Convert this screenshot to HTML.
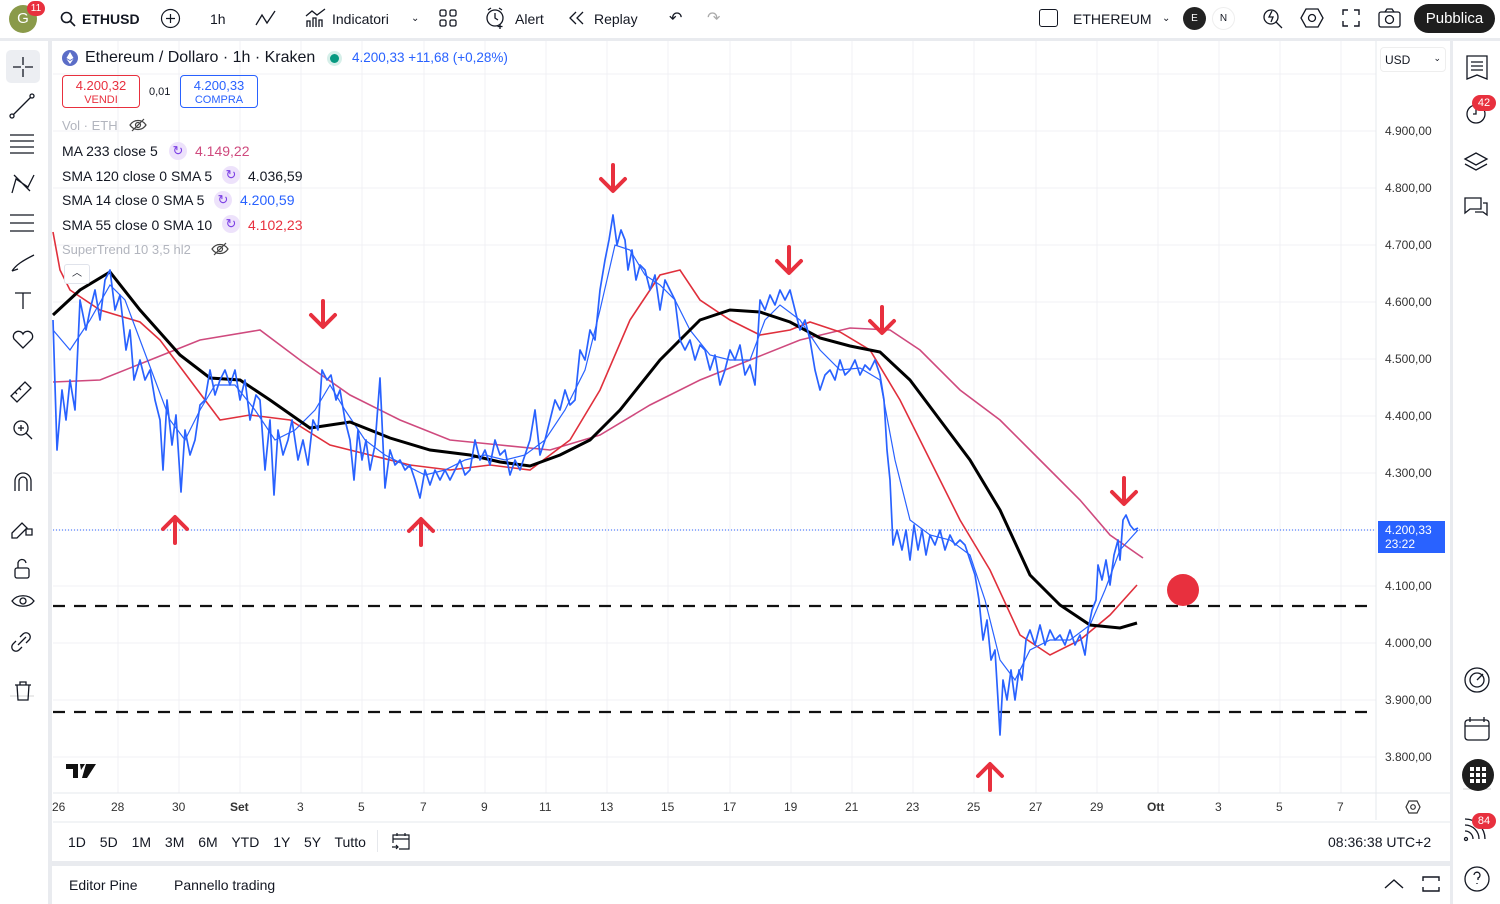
<!DOCTYPE html>
<html><head><meta charset="utf-8"><style>
*{margin:0;padding:0;box-sizing:border-box}
body{width:1500px;height:904px;overflow:hidden;background:#e9ebef;font-family:"Liberation Sans",sans-serif;color:#131722;position:relative}
.abs{position:absolute}
.top{left:0;top:0;width:1500px;height:38px;background:#fff}
.t{position:absolute;font-size:14px;top:11px;white-space:nowrap}
.left{left:0;top:41px;width:48px;height:863px;background:#fff}
.right{left:1453px;top:41px;width:47px;height:863px;background:#fff}
.main{left:52px;top:41px;width:1398px;height:820px;background:#fff}
.bot{left:52px;top:866px;width:1398px;height:38px;background:#fff}
.lg{position:absolute;font-size:14px;white-space:nowrap}
.ax{position:absolute;font-size:12px;color:#333;left:1385px}
.dx{position:absolute;font-size:12px;color:#333;top:800px}
.ic{position:absolute;width:18px;height:18px;border-radius:50%;background:#ede2fb;color:#7b3fe4;text-align:center;line-height:18px;font-size:13px}
</style></head><body>
<div class="abs top">
 <div class="abs" style="left:9px;top:5px;width:28px;height:28px;border-radius:50%;background:#8a9a4a;color:#fff;font-size:15px;text-align:center;line-height:28px">G</div>
 <div class="abs" style="left:27px;top:1px;width:18px;height:15px;border-radius:8px;background:#e8303e;color:#fff;font-size:10px;text-align:center;line-height:15px">11</div>
 <svg class="abs" style="left:60px;top:11px" width="16" height="16" fill="none" stroke="#131722" stroke-width="1.6"><circle cx="6.5" cy="6.5" r="5"/><path d="M10 10l5 5"/></svg>
 <div class="t" style="left:82px;font-weight:bold">ETHUSD</div>
 <svg class="abs" style="left:160px;top:8px" width="21" height="21" fill="none" stroke="#131722" stroke-width="1.2"><circle cx="10.5" cy="10.5" r="9"/><path d="M10.5 6v9M6 10.5h9"/></svg>
 <div class="t" style="left:210px">1h</div>
 <svg class="abs" style="left:255px;top:9px" width="22" height="18" fill="none" stroke="#131722" stroke-width="1.3"><path d="M1 16l6-10 5 8 8-12"/></svg>
 <svg class="abs" style="left:305px;top:8px" width="22" height="20" fill="none" stroke="#131722" stroke-width="1.3"><path d="M2 19V13h3v6M8 19V10h3v9M14 19V12h3v7M1 8l6-5 5 4 8-6"/></svg>
 <div class="t" style="left:332px">Indicatori</div>
 <div class="t" style="left:411px;font-size:10px;top:13px">⌄</div>
 <svg class="abs" style="left:439px;top:9px" width="18" height="18" fill="none" stroke="#131722" stroke-width="1.3"><rect x="1" y="1" width="6" height="6" rx="1.5"/><rect x="11" y="1" width="6" height="6" rx="1.5"/><rect x="1" y="11" width="6" height="6" rx="1.5"/><rect x="11" y="11" width="6" height="6" rx="1.5"/></svg>
 <svg class="abs" style="left:485px;top:7px" width="22" height="22" fill="none" stroke="#131722" stroke-width="1.3"><circle cx="10" cy="11" r="8"/><path d="M10 6v5l3 2M15 17v5M12.5 19.5h5M3 3l3-2M17 3l-3-2"/></svg>
 <div class="t" style="left:515px">Alert</div>
 <svg class="abs" style="left:568px;top:11px" width="18" height="14" fill="none" stroke="#131722" stroke-width="1.3"><path d="M8 1L2 7l6 6M15 1L9 7l6 6"/></svg>
 <div class="t" style="left:594px">Replay</div>
 <div class="t" style="left:669px;font-size:16px;top:8px">↶</div>
 <div class="t" style="left:707px;font-size:16px;top:8px;color:#aaa">↷</div>
 <div class="abs" style="left:1039px;top:9px;width:19px;height:18px;border:1.4px solid #131722;border-radius:3px"></div>
 <div class="t" style="left:1073px">ETHEREUM</div>
 <div class="t" style="left:1162px;font-size:10px;top:13px">⌄</div>
 <div class="abs" style="left:1183px;top:7px;width:23px;height:23px;border-radius:50%;background:#222;color:#fff;font-size:10px;text-align:center;line-height:23px">E</div>
 <div class="abs" style="left:1212px;top:7px;width:23px;height:23px;border-radius:50%;background:#fff;border:1px solid #eee;font-size:10px;text-align:center;line-height:21px">N</div>
 <svg class="abs" style="left:1262px;top:7px" width="22" height="22" fill="none" stroke="#131722" stroke-width="1.3"><circle cx="9" cy="10" r="7"/><path d="M14 15l6 6M10 4l-3 6h4l-2 5"/></svg>
 <svg class="abs" style="left:1300px;top:7px" width="24" height="22" fill="none" stroke="#131722" stroke-width="1.3"><path d="M6 2h12l5 9-5 9H6L1 11z"/><circle cx="12" cy="11" r="3.5"/></svg>
 <svg class="abs" style="left:1342px;top:9px" width="18" height="18" fill="none" stroke="#131722" stroke-width="1.4"><path d="M1 6V1h5M12 1h5v5M17 12v5h-5M6 17H1v-5"/></svg>
 <svg class="abs" style="left:1378px;top:8px" width="23" height="20" fill="none" stroke="#131722" stroke-width="1.3"><rect x="1" y="4" width="21" height="15" rx="2"/><path d="M7 4l2-3h5l2 3"/><circle cx="11.5" cy="11.5" r="4"/></svg>
 <div class="abs" style="left:1414px;top:4px;width:81px;height:29px;border-radius:15px;background:#1e1e1e;color:#fff;font-size:15px;text-align:center;line-height:29px">Pubblica</div>
</div>

<div class="abs left">
 <div class="abs" style="left:6px;top:9px;width:34px;height:33px;background:#eceef2;border-radius:5px"></div>
 <svg class="abs" style="left:0;top:0" width="48" height="700" fill="none" stroke="#131722" stroke-width="1.3">
  <path d="M23 16v8M23 28v8M13 26h8M25 26h8"/>
  <path d="M12 75l20-20"/><circle cx="12" cy="75" r="2" fill="#fff"/><circle cx="32" cy="55" r="2" fill="#fff"/>
  <path d="M10 94h24M10 100h24M10 106h24M10 112h24"/>
  <path d="M12 152l4-14 12 8 6-12M14 134l16 16"/>
  <path d="M10 174h24M10 182h24M10 190h24"/>
  <path d="M12 230c4-6 10-10 22-16M12 230l6-2"/>
  <path d="M15 252h16M23 252v16"/>
  <path d="M23 307l-9-9a5 5 0 0 1 9-5 5 5 0 0 1 9 5z"/>
  <path d="M11 355l14-14 6 6-14 14zM15 351l2 2M19 347l2 2"/>
  <circle cx="21" cy="387" r="7"/><path d="M26 392l6 6M18 387h6M21 384v6"/>
  <path d="M15 450v-10a8 8 0 0 1 16 0v10M19 450v-10a4 4 0 0 1 8 0v10"/>
  <path d="M12 492l10-10 5 5-10 10h-5zM26 488h6v6h-6z"/>
  <rect x="15" y="527" width="14" height="10" rx="2"/><path d="M18 527v-4a4 4 0 0 1 8-1"/>
  <path d="M12 560c5-7 17-7 22 0-5 7-17 7-22 0z"/><circle cx="23" cy="560" r="3"/>
  <path d="M16 600l-3 3a4 4 0 0 0 6 6l3-3M26 602l3-3a4 4 0 0 0-6-6l-3 3M18 604l8-8"/>
  <path d="M10 655h24" stroke="#ddd"/>
  <path d="M15 644h16M17 644l1 15h10l1-15M20 644v-3h6v3"/>
 </svg>
</div>

<div class="abs main"></div>
<svg class="abs" style="left:0;top:0" width="1500" height="904">
 <g stroke="#f0f1f4" stroke-width="1">
  <path d="M118 41V793M179 41V793M240 41V793M301 41V793M362 41V793M424 41V793M485 41V793M546 41V793M607 41V793M668 41V793M730 41V793M791 41V793M852 41V793M913 41V793M974 41V793M1036 41V793M1097 41V793M1158 41V793M1219 41V793M1280 41V793M1341 41V793"/>
  <path d="M53 74H1376M53 131H1376M53 188H1376M53 245H1376M53 302H1376M53 359H1376M53 416H1376M53 473H1376M53 530H1376M53 586H1376M53 643H1376M53 700H1376M53 757H1376"/>
 </g>
 <path d="M1376 41V820M53 793H1450M53 822H1450" stroke="#e6e8ec"/>
 <path d="M53 530H1376" stroke="#2962ff" stroke-width="1" stroke-dasharray="1 2"/>
 <path d="M53 606H1372M53 712H1372" stroke="#111" stroke-width="2.2" stroke-dasharray="12 9"/>
 <polyline fill="none" stroke="#cf4a7e" stroke-width="1.6" points="53,382 100,380 150,360 200,340 260,330 300,360 350,395 400,420 450,440 500,445 550,450 600,435 650,405 700,380 750,360 800,340 850,328 890,330 920,350 960,390 1000,420 1040,460 1080,500 1110,535 1143,558"/>
 <polyline fill="none" stroke="#e0303c" stroke-width="1.6" points="53,232 60,270 70,290 100,310 140,322 160,340 190,380 220,420 250,415 290,420 330,445 370,455 410,465 450,470 490,465 530,470 570,440 600,390 630,320 660,275 680,270 700,300 730,320 760,335 790,330 810,322 840,332 870,350 900,400 930,460 960,520 990,570 1020,635 1050,655 1080,640 1110,615 1137,585"/>
 <polyline fill="none" stroke="#2962ff" stroke-width="1.2" points="53,330 70,350 90,320 110,285 125,300 140,340 155,380 170,420 185,440 200,410 215,385 235,385 255,410 275,440 295,430 315,410 330,385 345,410 365,440 385,455 405,465 425,475 445,470 465,460 485,455 505,460 525,455 545,440 565,410 585,370 600,310 615,245 630,250 645,275 660,285 675,300 690,330 710,355 730,360 750,360 765,320 780,305 800,320 820,350 840,370 860,368 880,380 895,460 910,520 930,535 950,540 970,555 985,600 1000,660 1015,680 1030,650 1050,640 1070,640 1090,625 1105,590 1120,550 1138,530"/>
 <polyline fill="none" stroke="#000" stroke-width="3" points="53,315 80,290 110,272 140,310 180,355 210,378 240,380 270,400 310,428 350,422 390,438 430,450 470,455 500,462 530,466 560,455 590,440 620,410 660,360 700,320 730,310 760,312 790,322 820,338 850,346 880,352 910,380 940,420 970,460 1000,510 1030,575 1060,605 1090,625 1120,628 1137,623"/>
 <polyline fill="none" stroke="#2962ff" stroke-width="1.7" stroke-linejoin="round" points="53,320 57,450 62,390 66,420 70,380 75,410 80,300 86,330 90,310 95,290 100,320 105,280 110,270 115,310 120,295 126,350 130,330 134,380 140,360 145,380 150,370 155,400 160,420 163,470 167,400 172,445 176,415 181,492 185,430 190,455 195,440 200,405 205,400 210,370 215,395 220,380 225,370 230,385 235,370 240,400 245,380 250,420 256,395 260,400 265,470 270,420 274,495 278,430 283,455 288,440 292,420 298,460 303,440 308,465 313,420 318,430 322,370 327,380 331,375 336,400 340,390 345,420 350,440 354,480 358,430 362,460 366,440 370,470 375,445 380,378 385,488 390,450 395,465 400,460 405,470 410,465 415,480 420,498 425,470 430,485 435,470 440,480 445,470 450,480 455,470 460,460 465,475 470,470 475,440 480,460 485,450 490,465 495,440 500,455 505,450 510,475 515,460 520,470 525,455 530,440 535,410 540,455 545,440 550,420 555,400 560,410 565,390 570,405 575,400 580,350 585,360 590,330 595,340 600,290 605,260 609,240 613,215 617,245 621,230 625,240 628,270 632,250 636,280 640,265 645,270 650,290 655,275 660,310 665,280 670,290 675,300 680,340 685,350 690,340 695,360 700,345 705,350 710,370 715,355 720,385 725,370 730,350 735,360 740,345 745,375 750,365 755,385 760,300 765,310 770,295 775,305 780,290 785,300 790,290 795,310 800,330 805,320 810,340 815,370 820,390 825,375 830,370 835,380 840,360 845,375 850,370 855,360 860,375 865,365 870,370 875,360 880,375 884,400 887,450 890,480 893,545 897,530 902,550 906,530 910,560 914,525 918,550 922,530 926,555 930,535 935,545 940,530 945,550 950,535 955,545 960,540 965,545 970,560 975,575 979,600 983,640 987,620 991,660 995,650 998,700 1000,735 1003,680 1007,700 1011,670 1015,700 1019,670 1022,680 1026,640 1030,630 1035,645 1040,625 1045,645 1050,630 1055,640 1060,635 1065,645 1070,630 1075,645 1080,635 1085,655 1088,630 1092,610 1096,600 1098,565 1102,580 1106,560 1110,585 1114,555 1118,540 1120,560 1123,520 1126,515 1130,525 1134,530 1138,528"/>
 <g fill="none" stroke="#e8303e" stroke-width="4" stroke-linecap="round" stroke-linejoin="round">
  <path d="M613 165v25M601 179l12 12 12-12"/>
  <path d="M323 301v25M311 315l12 12 12-12"/>
  <path d="M789 247v25M777 261l12 12 12-12"/>
  <path d="M882 307v25M870 321l12 12 12-12"/>
  <path d="M1124 478v25M1112 492l12 12 12-12"/>
  <path d="M175 543v-25M163 529l12-12 12 12"/>
  <path d="M421 545v-25M409 531l12-12 12 12"/>
  <path d="M990 790v-25M978 776l12-12 12 12"/>
 </g>
 <circle cx="1183" cy="590" r="16" fill="#e8303e"/>
 <path d="M66 764h12v14h-5v-9h-7zM80 764h5l-4 6zM86 764h10l-9 14h-5z" fill="#111"/>
</svg>

<!-- legend -->
<svg class="abs" style="left:62px;top:50px" width="16" height="16"><circle cx="8" cy="8" r="8" fill="#5b6dc7"/><path d="M8 2l-3.5 6L8 10l3.5-2zM4.5 9L8 14l3.5-5L8 11z" fill="#fff"/></svg>
<div class="lg" style="left:85px;top:49px;font-size:16px">Ethereum / Dollaro · 1h · Kraken</div>
<div class="abs" style="left:330px;top:54px;width:9px;height:9px;border-radius:50%;background:#089981;box-shadow:0 0 0 3px #d6efe9"></div>
<div class="lg" style="left:352px;top:50px;color:#2962ff;font-size:13.5px">4.200,33 +11,68 (+0,28%)</div>
<div class="abs" style="left:62px;top:75px;width:78px;height:33px;border:1px solid #e8303e;border-radius:4px;color:#e8303e;text-align:center;font-size:13px;line-height:13px;padding-top:3px">4.200,32<br><span style="font-size:11px">VENDI</span></div>
<div class="lg" style="left:149px;top:86px;font-size:11px">0,01</div>
<div class="abs" style="left:180px;top:75px;width:78px;height:33px;border:1px solid #2962ff;border-radius:4px;color:#2962ff;text-align:center;font-size:13px;line-height:13px;padding-top:3px">4.200,33<br><span style="font-size:11px">COMPRA</span></div>
<div class="lg" style="left:62px;top:118px;color:#b2b5be;font-size:13px">Vol · ETH</div>
<svg class="abs" style="left:129px;top:118px" width="18" height="14" fill="none" stroke="#444" stroke-width="1.2"><path d="M1 7c4-6 12-6 16 0-4 6-12 6-16 0z"/><circle cx="9" cy="7" r="2.5"/><path d="M3 13L15 1"/></svg>
<div class="lg" style="left:62px;top:143px">MA 233 close 5</div><div class="ic" style="left:169px;top:142px">↻</div><div class="lg" style="left:195px;top:143px;color:#cf4a7e">4.149,22</div>
<div class="lg" style="left:62px;top:168px">SMA 120 close 0 SMA 5</div><div class="ic" style="left:222px;top:166px">↻</div><div class="lg" style="left:248px;top:168px">4.036,59</div>
<div class="lg" style="left:62px;top:192px">SMA 14 close 0 SMA 5</div><div class="ic" style="left:214px;top:191px">↻</div><div class="lg" style="left:240px;top:192px;color:#2962ff">4.200,59</div>
<div class="lg" style="left:62px;top:217px">SMA 55 close 0 SMA 10</div><div class="ic" style="left:222px;top:215px">↻</div><div class="lg" style="left:248px;top:217px;color:#e8303e">4.102,23</div>
<div class="lg" style="left:62px;top:242px;color:#b2b5be;font-size:13px">SuperTrend 10 3,5 hl2</div>
<svg class="abs" style="left:211px;top:242px" width="18" height="14" fill="none" stroke="#444" stroke-width="1.2"><path d="M1 7c4-6 12-6 16 0-4 6-12 6-16 0z"/><circle cx="9" cy="7" r="2.5"/><path d="M3 13L15 1"/></svg>
<div class="abs" style="left:64px;top:264px;width:26px;height:20px;border:1px solid #e0e3eb;border-radius:3px;background:#fff;font-size:10px;text-align:center;line-height:18px">︿</div>

<!-- price axis -->
<div class="abs" style="left:1380px;top:47px;width:66px;height:25px;border:1px solid #eee;border-radius:4px;background:#fff;font-size:12px;padding:5px 4px">USD<span style="float:right;font-size:9px">⌄</span></div>
<div class="ax" style="top:124px">4.900,00</div><div class="ax" style="top:181px">4.800,00</div><div class="ax" style="top:238px">4.700,00</div><div class="ax" style="top:295px">4.600,00</div><div class="ax" style="top:352px">4.500,00</div><div class="ax" style="top:409px">4.400,00</div><div class="ax" style="top:466px">4.300,00</div><div class="ax" style="top:579px">4.100,00</div><div class="ax" style="top:636px">4.000,00</div><div class="ax" style="top:693px">3.900,00</div><div class="ax" style="top:750px">3.800,00</div>
<div class="abs" style="left:1378px;top:521px;width:67px;height:32px;background:#2962ff;color:#fff;font-size:12px;line-height:14px;padding:2px 0 0 7px">4.200,33<br>23:22</div>

<!-- date axis -->
<div class="dx" style="left:52px">26</div><div class="dx" style="left:111px">28</div><div class="dx" style="left:172px">30</div><div class="dx" style="left:230px;font-weight:bold">Set</div><div class="dx" style="left:297px">3</div><div class="dx" style="left:358px">5</div><div class="dx" style="left:420px">7</div><div class="dx" style="left:481px">9</div><div class="dx" style="left:539px">11</div><div class="dx" style="left:600px">13</div><div class="dx" style="left:661px">15</div><div class="dx" style="left:723px">17</div><div class="dx" style="left:784px">19</div><div class="dx" style="left:845px">21</div><div class="dx" style="left:906px">23</div><div class="dx" style="left:967px">25</div><div class="dx" style="left:1029px">27</div><div class="dx" style="left:1090px">29</div><div class="dx" style="left:1147px;font-weight:bold">Ott</div><div class="dx" style="left:1215px">3</div><div class="dx" style="left:1276px">5</div><div class="dx" style="left:1337px">7</div>
<svg class="abs" style="left:1405px;top:800px" width="16" height="14" fill="none" stroke="#333" stroke-width="1.2"><path d="M4 1h8l3 6-3 6H4L1 7z"/><circle cx="8" cy="7" r="2.3"/></svg>
<div class="abs" style="left:68px;top:834px;font-size:14px;word-spacing:10px;white-space:nowrap">1D 5D 1M 3M 6M YTD 1Y 5Y Tutto</div>
<div class="abs" style="left:377px;top:830px;width:1px;height:22px;background:#e6e8ec"></div>
<svg class="abs" style="left:391px;top:831px" width="20" height="20" fill="none" stroke="#131722" stroke-width="1.2"><path d="M2 12V4h16v14H8M2 8h16M6 2v3M14 2v3M1 16h6M5 14l2 2-2 2"/></svg>
<div class="abs" style="left:1328px;top:834px;font-size:14px">08:36:38 UTC+2</div>

<div class="abs bot">
 <div class="abs" style="left:17px;top:11px;font-size:14px">Editor Pine</div>
 <div class="abs" style="left:122px;top:11px;font-size:14px">Pannello trading</div>
 <svg class="abs" style="left:1332px;top:12px" width="20" height="12" fill="none" stroke="#131722" stroke-width="1.4"><path d="M1 10l9-8 9 8"/></svg>
 <svg class="abs" style="left:1370px;top:10px" width="18" height="16" fill="none" stroke="#131722" stroke-width="1.4"><path d="M1 5V1h16v4M1 11v4h16v-4"/></svg>
</div>

<div class="abs right">
 <svg class="abs" style="left:0;top:0" width="47" height="863" fill="none" stroke="#131722" stroke-width="1.3">
  <path d="M14 15h20v23l-10-4-10 4zM18 21h12M18 25h12M18 29h12"/>
  <circle cx="23" cy="73" r="9"/><path d="M23 68v5h-3"/>
  <path d="M12 118l11-6 11 6-11 6zM12 123l11 6 11-6"/>
  <path d="M12 157h16v11H17l-5 4zM30 162h4v12l-4-3h-8"/>
  <circle cx="24" cy="639" r="12"/><circle cx="24" cy="639" r="7"/><path d="M24 639l6-6"/>
  <rect x="12" y="679" width="24" height="20" rx="3"/><path d="M12 685h24M17 676v5M31 676v5"/>
  <path d="M10 748h28" stroke="#ddd"/>
  <circle cx="13" cy="798" r="1.5"/><path d="M12 790a8 8 0 0 1 8 8M12 784a14 14 0 0 1 14 14M12 778a20 20 0 0 1 20 20"/>
  <circle cx="24" cy="838" r="12"/><path d="M21 834a3 3 0 1 1 4 3v2M24 842v1"/>
 </svg>
 <div class="abs" style="left:19px;top:54px;width:24px;height:16px;border-radius:8px;background:#e8303e;color:#fff;font-size:11px;text-align:center;line-height:16px">42</div>
 <div class="abs" style="left:9px;top:718px;width:32px;height:32px;border-radius:50%;background:#1e1e1e"></div>
 <svg class="abs" style="left:16px;top:725px" width="18" height="18" fill="#fff"><rect x="1" y="1" width="4" height="4"/><rect x="7" y="1" width="4" height="4"/><rect x="13" y="1" width="4" height="4"/><rect x="1" y="7" width="4" height="4"/><rect x="7" y="7" width="4" height="4"/><rect x="13" y="7" width="4" height="4"/><rect x="1" y="13" width="4" height="4"/><rect x="7" y="13" width="4" height="4"/><rect x="13" y="13" width="4" height="4"/></svg>
 <div class="abs" style="left:19px;top:772px;width:24px;height:16px;border-radius:8px;background:#e8303e;color:#fff;font-size:11px;text-align:center;line-height:16px">84</div>
</div>
</body></html>
